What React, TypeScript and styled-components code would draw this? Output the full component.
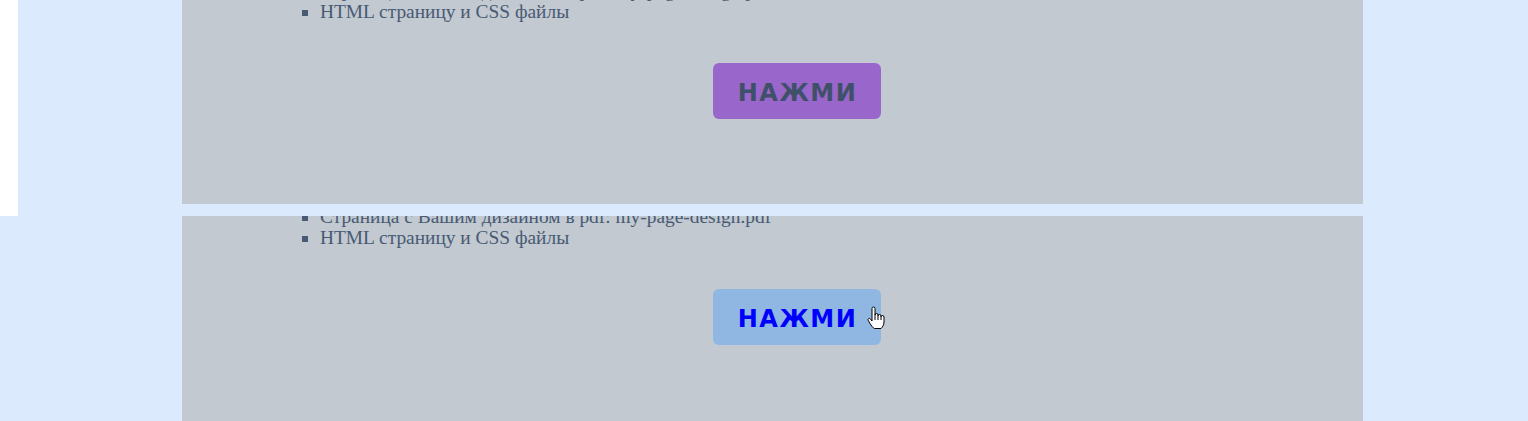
import { createGlobalStyle, styled } from "styled-components"

const GlobalStyle = createGlobalStyle`
  html, body {
    margin: 0;
    padding: 0;
    background: #dbebfd;
  }
  * {
    box-sizing: border-box;
  }
`

const Frame = styled.section<{ $height: number }>`
  position: relative;
  height: ${props => props.$height}px;
  overflow: hidden;
  display: grid;
  grid-template-columns: 182px 1181px 1fr;
  align-items: start;
  background: #dbebfd;
`

const Gutter = styled.div<{ $edge: boolean }>`
  align-self: stretch;
  width: 18px;
  background: ${props => props.$edge ? "#ffffff" : "transparent"};
`

const Panel = styled.div<{ $scroll: number }>`
  margin-top: -${props => props.$scroll}px;
  padding: 0 49px 85px 98px;
  background: #c2c9d0;
`

const FileList = styled.ul`
  margin: 0;
  padding-left: 40px;
  list-style: square;
  color: #485a74;
  font-family: "Liberation Serif", "Times New Roman", serif;
  font-size: 19.4px;
  line-height: 21px;
`

const ButtonRow = styled.div`
  display: flex;
  justify-content: center;
  padding-top: 41px;
`

const PushButton = styled.button<{ $hover: boolean }>`
  position: relative;
  width: 168px;
  height: 56px;
  border: none;
  border-radius: 6px;
  background: ${props => props.$hover ? "#90b7e2" : "#9966cc"};
  color: ${props => props.$hover ? "#0000ff" : "#3f5168"};
  font-family: "DejaVu Sans", Verdana, sans-serif;
  font-weight: 700;
  font-size: 24px;
  letter-spacing: 1.5px;
  padding: 3px 0 0 1px;
`

const Pointer = styled.svg`
  position: absolute;
  left: 154px;
  top: 17px;
  width: 18px;
  height: 24px;
`

const HandCursor = () => (
  <Pointer viewBox="0 0 18 24">
    <path
      d="M5 2.5a1.5 1.5 0 0 1 3 0V9a1.5 1.5 0 0 1 3 0v1a1.5 1.5 0 0 1 3 0v1a1.5 1.5 0 0 1 3 0v5c0 3-1.5 5-3 6.5H7.5C6 22 4.3 19.5 3 17.5L1.2 14.3a1.3 1.3 0 0 1 2.1-1.5L5 15Z"
      fill="#ffffff"
      stroke="#000000"
      strokeWidth="1"
      strokeLinejoin="round"
    />
    <path d="M8 9v5M11 10v4M14 11v3" stroke="#000000" strokeWidth="1" fill="none" />
  </Pointer>
)

const Screen = (props: { height: number, scroll: number, edge?: boolean, hover?: boolean }) => {
  const { height, scroll, edge, hover } = props
  return (
    <Frame $height={height}>
      <Gutter $edge={!!edge} />
      <Panel $scroll={scroll}>
        <FileList>
          <li>Страница с Вашим дизайном в pdf: my-page-design.pdf</li>
          <li>HTML страницу и CSS файлы</li>
        </FileList>
        <ButtonRow>
          <PushButton $hover={!!hover}>
            НАЖМИ
            {hover && <HandCursor />}
          </PushButton>
        </ButtonRow>
      </Panel>
    </Frame>
  )
}

export default function App() {
  return (
    <>
      <GlobalStyle />
      <Screen height={216} scroll={20} edge />
      <Screen height={205} scroll={10} hover />
    </>
  )
}
